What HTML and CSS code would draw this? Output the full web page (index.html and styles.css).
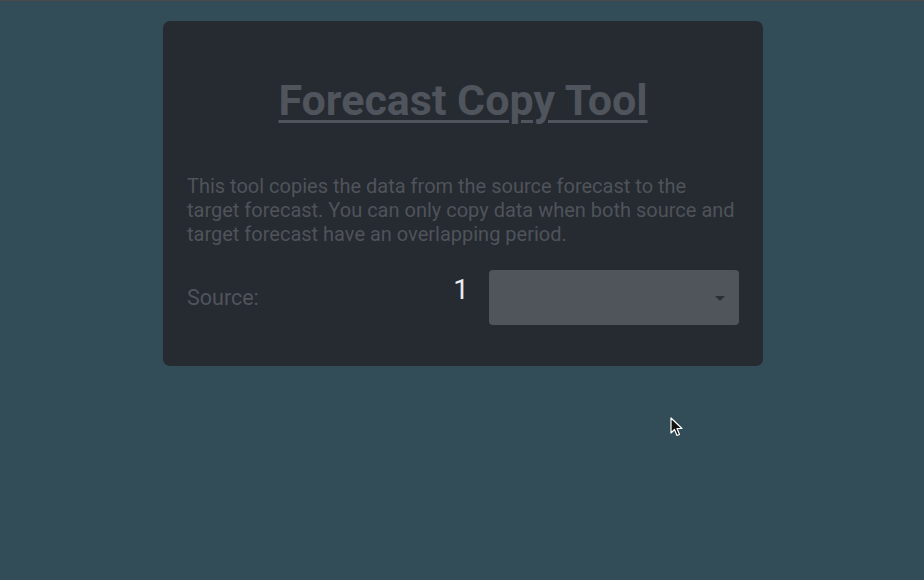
FILE: index.html
```html
<!DOCTYPE html>
<html lang="en">
<head>
<meta charset="utf-8">
<title>Forecast Copy Tool</title>
<link rel="stylesheet" href="styles.css">
</head>
<body>
<main class="page">
  <section class="card">
    <h1 class="title">Forecast Copy Tool</h1>
    <p class="intro">This tool copies the data from the source forecast to the target forecast. You can only copy data when both source and target forecast have an overlapping period.</p>
    <div class="row">
      <span class="label">Source:</span>
      <span class="count">1</span>
      <div class="select">
        <span class="caret"></span>
      </div>
    </div>
  </section>
</main>
<svg class="cursor" width="14" height="21" viewBox="0 0 14 21">
  <path d="M1 1 L1 16 L4.5 12.5 L7 18.5 L9.5 17.5 L7 11.5 L12 11.5 Z" fill="#111" stroke="#fff" stroke-width="1.2" stroke-linejoin="round"/>
</svg>
</body>
</html>
```
FILE: styles.css
```css
html, body {
  margin: 0;
  padding: 0;
  height: 100%;
}
body {
  background: #324d57;
  border-top: 1px solid #4a4a4c;
  font-family: Roboto, "Liberation Sans", sans-serif;
  position: relative;
  overflow: hidden;
}
.page {
  display: flex;
  justify-content: center;
  padding-top: 20px;
}
.card {
  width: 600px;
  box-sizing: border-box;
  background: #262a31;
  border-radius: 7px;
  padding: 30px 24px 41px;
  margin-left: 2px;
}
.title {
  margin: 25px 0 0;
  text-align: center;
  font-size: 43px;
  font-weight: 700;
  line-height: 48px;
  color: #50545c;
  text-decoration: underline;
  text-decoration-thickness: 3px;
  text-underline-offset: 5px;
}
.intro {
  margin: 50px 0 0;
  font-size: 20px;
  line-height: 24px;
  color: #4f535a;
}
.row {
  margin-top: 24px;
  display: flex;
  align-items: center;
}
.label {
  flex: 1;
  font-size: 21.5px;
  color: #50545c;
}
.count {
  font-size: 28px;
  color: #e8ecf2;
  margin-right: 20px;
  position: relative;
  top: -8px;
}
.select {
  width: 250px;
  height: 55px;
  background: #50545b;
  border-radius: 4px;
  position: relative;
}
.caret {
  position: absolute;
  right: 14px;
  top: 26px;
  width: 0;
  height: 0;
  border-left: 5px solid transparent;
  border-right: 5px solid transparent;
  border-top: 5px solid #2c3036;
}
.cursor {
  position: absolute;
  left: 670px;
  top: 416px;
}
```
